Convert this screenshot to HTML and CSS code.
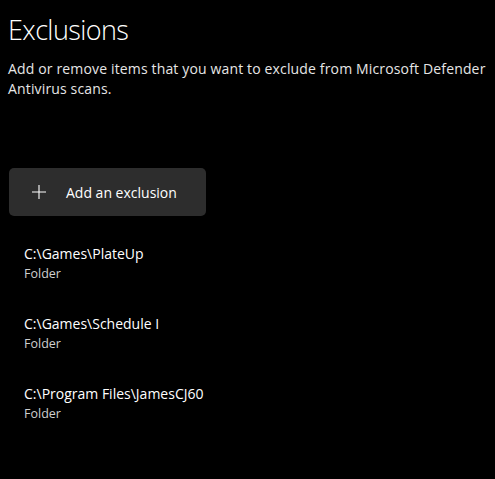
FILE: index.html
```html
<!DOCTYPE html>
<html lang="en">
<head>
<meta charset="utf-8">
<title>Exclusions</title>
<link rel="stylesheet" href="styles.css">
</head>
<body>
<main class="page">
  <h1 class="title">Exclusions</h1>
  <p class="desc">Add or remove items that you want to exclude from Microsoft Defender Antivirus scans.</p>
  <button class="add-btn" type="button">
    <svg class="plus" width="16" height="16" viewBox="0 0 16 16" aria-hidden="true"><path d="M8 1v14M1 8h14" stroke="#fff" stroke-width="1.1" fill="none"/></svg>
    <span>Add an exclusion</span>
  </button>
  <ul class="list">
    <li class="item"><div class="path">C:\Games\PlateUp</div><div class="kind">Folder</div></li>
    <li class="item"><div class="path">C:\Games\Schedule I</div><div class="kind">Folder</div></li>
    <li class="item"><div class="path">C:\Program Files\JamesCJ60</div><div class="kind">Folder</div></li>
  </ul>
</main>
</body>
</html>
```
FILE: styles.css
```css
html, body {
  margin: 0;
  padding: 0;
  background: #000;
  color: #fff;
  font-family: "Open Sans", "Noto Sans", sans-serif;
}
.page {
  padding: 12px 0 0 8px;
}
.title {
  margin: 0;
  font-size: 27px;
  font-weight: 300;
  line-height: 36px;
  letter-spacing: -0.6px;
}
.desc {
  margin: 11px 0 0 0;
  font-size: 14px;
  line-height: 20px;
  letter-spacing: 0.15px;
  color: #e6e6e6;
}
.add-btn {
  margin: 69px 0 0 1px;
  width: 197px;
  height: 48px;
  border: none;
  border-radius: 5px;
  background: #2d2d2d;
  color: #fff;
  font-family: inherit;
  font-size: 14px;
  display: flex;
  align-items: center;
  padding: 0 0 0 22px;
  gap: 19px;
}
.list {
  list-style: none;
  margin: 28px 0 0 0;
  padding: 0 0 0 16px;
}
.item {
  height: 70px;
}
.path {
  font-size: 14px;
  line-height: 20px;
}
.kind {
  margin-top: 1px;
  font-size: 12.5px;
  line-height: 17px;
  color: #cfcfcf;
}
```
